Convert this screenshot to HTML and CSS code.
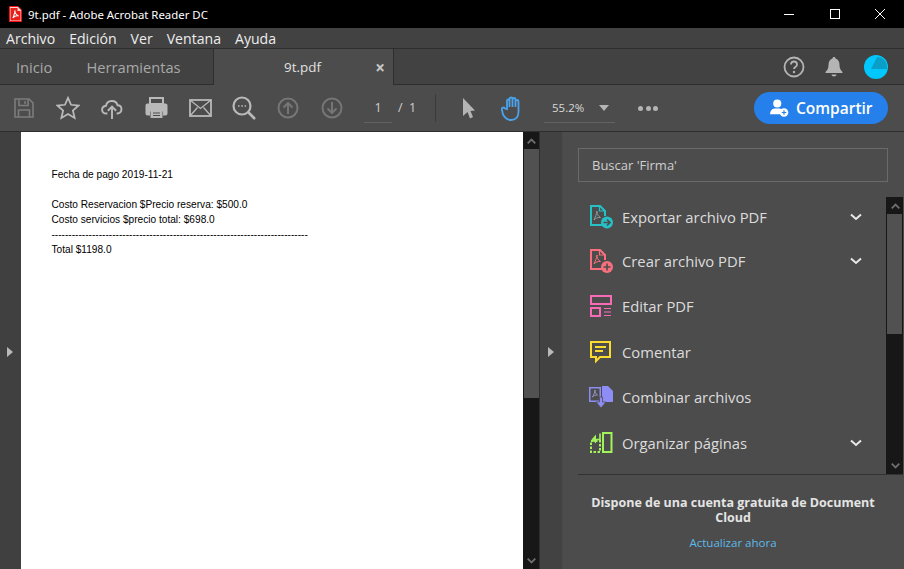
FILE: index.html
```html
<!DOCTYPE html>
<html lang="es">
<head>
    <meta charset="UTF-8">
    <title>9t.pdf - Adobe Acrobat Reader DC</title>
    <link rel="stylesheet" href="styles.css">
</head>
<body>

<div class="titlebar">
    <svg class="app-icon" width="13" height="16" viewBox="0 0 13 16">
        <path d="M.5.500h8.500l3.500 3.500v11.500H.5z" fill="#f5d5d5" stroke="#f01414"/>
        <path d="M1.500 2h7v3h3v9.500h-10z" fill="#e8201c"/>
        <path d="M6 4.500c-.5 2 1 4 3.500 5.500-2-.5-4 0-5.500 2 .8-2.500 2-5 2-7.500z" fill="none" stroke="#fff" stroke-width="1.100"/>
    </svg>
    <span class="title-text">9t.pdf - Adobe Acrobat Reader DC</span>
    <div class="win-buttons">
        <svg width="12" height="12" viewBox="0 0 12 12"><path d="M1 6.500h10" stroke="#fff"/></svg>
        <svg width="12" height="12" viewBox="0 0 12 12"><rect x="1.500" y="1.500" width="9" height="9" fill="none" stroke="#fff"/></svg>
        <svg width="12" height="12" viewBox="0 0 12 12"><path d="M1 1l10 10M11 1L1 11" stroke="#fff"/></svg>
    </div>
</div>

<div class="menubar">
    <span>Archivo</span>
    <span>Edición</span>
    <span>Ver</span>
    <span>Ventana</span>
    <span>Ayuda</span>
</div>

<div class="tabbar">
    <div class="home-tabs">
        <span>Inicio</span>
        <span>Herramientas</span>
    </div>
    <div class="doc-tab">
        <span class="doc-name">9t.pdf</span>
        <span class="doc-close">×</span>
    </div>
    <div class="tab-right">
        <svg width="22" height="22" viewBox="0 0 22 22">
            <circle cx="11" cy="11" r="9.500" fill="none" stroke="#b4b4b4" stroke-width="1.800"/>
            <path d="M8 8.500c0-4 6-4 6 0 0 2.500-3 2.500-3 4.500" fill="none" stroke="#b4b4b4" stroke-width="1.800"/>
            <circle cx="11" cy="16" r="1.200" fill="#b4b4b4"/>
        </svg>
        <svg width="18" height="21" viewBox="0 0 18 21">
            <path d="M9 1c1 0 1.500.6 1.500 1.500C13.500 3.500 14.500 6 14.500 9c0 3.500 1 5 3 7v1H.5v-1c2-2 3-3.500 3-7 0-3 1-5.500 4-6.500C7.500 1.600 8 1 9 1z" fill="#b4b4b4"/>
            <path d="M6.500 18.500h5c0 1-1 2-2.500 2s-2.500-1-2.500-2z" fill="#b4b4b4"/>
        </svg>
        <svg width="24" height="24" viewBox="0 0 24 24">
            <circle cx="12" cy="12" r="12" fill="#00c8ff"/>
            <path d="M13 2c5 0 9 3 10 9v3H7z" fill="#0a9fc7"/>
        </svg>
    </div>
</div>

<div class="toolbar">
    <div class="tool-group">
        <svg width="20" height="20" viewBox="0 0 20 20" fill="none" stroke="#7c7c7c" stroke-width="1.600">
            <path d="M1 1h14l4 4v14H1z"/>
            <path d="M5 1.500v6h9v-6M4.500 19v-7h11v7"/>
            <path d="M11 3v3" stroke-width="1.500"/>
        </svg>
        <svg width="24" height="24" viewBox="0 0 26 26" fill="none" stroke="#b9b9b9" stroke-width="1.900">
            <path d="M13 2l3.300 7.500 8.200.8-6.200 5.400 1.900 8.100-7.200-4.300-7.200 4.300 1.900-8.100-6.200-5.400 8.200-.8z"/>
        </svg>
        <svg width="22" height="22" viewBox="0 0 24 24" fill="none" stroke="#b9b9b9" stroke-width="2.100">
            <path d="M7 18H6c-6 0-6.500-7.500-.5-8.500C6.500 3 16.500 2.500 18 9c5.500 0 6 8 0 9h-1"/>
            <path d="M12 24V11M7.500 15l4.500-4.500 4.500 4.500"/>
        </svg>
        <svg width="23" height="22" viewBox="0 0 23 22">
            <path d="M5 1h13v6H5z" fill="none" stroke="#b9b9b9" stroke-width="2"/>
            <path d="M2.500 6.500h18a2 2 0 0 1 2 2v8a2 2 0 0 1-2 2H18v-4H5v4H2.500a2 2 0 0 1-2-2v-8a2 2 0 0 1 2-2z" fill="#b9b9b9"/>
            <path d="M5.500 13.500h12V21h-12z" fill="#b9b9b9"/>
            <path d="M8 16h7M8 18.500h7" stroke="#4c4c4c" stroke-width="1.200"/>
        </svg>
        <svg width="23" height="18" viewBox="0 0 23 18" fill="none" stroke="#b9b9b9" stroke-width="1.800">
            <rect x="1" y="1" width="21" height="16"/>
            <path d="M1 1l10.500 8.500L22 1M1 17l7.500-8.500M22 17l-7.500-8.500" stroke-width="1.300"/>
        </svg>
        <svg width="24" height="24" viewBox="0 0 24 24" fill="none" stroke="#b9b9b9" stroke-width="2.200">
            <circle cx="10" cy="10" r="8.500"/>
            <path d="M16 16l7 7" stroke-width="2.600"/>
            <path d="M6 10h1.500M9.300 10h1.500M12.600 10h1.500" stroke-width="1.600"/>
        </svg>
        <svg width="22" height="22" viewBox="0 0 22 22" fill="none" stroke="#767676" stroke-width="2">
            <circle cx="11" cy="11" r="9.500"/>
            <path d="M11 17V6M6.500 10.500L11 6l4.500 4.500"/>
        </svg>
        <svg width="22" height="22" viewBox="0 0 22 22" fill="none" stroke="#767676" stroke-width="2">
            <circle cx="11" cy="11" r="9.500"/>
            <path d="M11 5v11M6.500 11.500L11 16l4.500-4.500"/>
        </svg>
    </div>
    <div class="page-box">
        <span class="page-num">1</span>
        <span class="page-total">/ &nbsp;1</span>
    </div>
    <div class="tool-sep"></div>
    <svg class="icon-cursor" width="14" height="21" viewBox="0 0 14 21"><path d="M1 0l12 12.500-4.500.5 2.500 6-3 1.500-2.500-6.500L1 18z" fill="#b4b4b4"/></svg>
    <svg class="icon-hand" width="24" height="25" viewBox="0 0 24 25" fill="none" stroke="#4aa3ee" stroke-width="1.800">
        <path d="M6 13V5c0-2 2.500-2 2.500 0v6V3c0-2 3-2 3 0v8V3.500c0-2 3-2 3 0V11V5.500c0-2 3-2 3 0V16c0 5-3 8-7.500 8-4 0-6-2-8-5.500L1 14c-1-2 1.500-3.500 3-1.500z"/>
    </svg>
    <div class="zoom-box">
        <span>55.2%</span>
        <svg width="10" height="6" viewBox="0 0 10 6"><path d="M0 0h10L5 6z" fill="#b4b4b4"/></svg>
    </div>
    <div class="more-dots"><i></i><i></i><i></i></div>
    <div class="share-btn">
        <svg width="19" height="18" viewBox="0 0 21 20">
            <circle cx="8" cy="5" r="4.500" fill="#fff"/>
            <path d="M0 17c0-4 2-6 5-6.500h6c2 .5 3 1.500 3.500 2.500-2.500 1-3.500 2.500-3.500 4z" fill="#fff"/>
            <circle cx="15.500" cy="15" r="4.800" fill="#fff"/>
            <path d="M13 15h5M15.500 12.500v5" stroke="#2680eb" stroke-width="1.300"/>
        </svg>
        <span>Compartir</span>
    </div>
</div>

<div class="workspace">
    <div class="left-strip"><span class="arrow-right"></span></div>
    <div class="page">
        <p class="line first">Fecha de pago 2019-11-21</p>
        <p class="line gap">Costo Reservacion $Precio reserva: $500.0</p>
        <p class="line">Costo servicios $precio total: $698.0</p>
        <p class="line">----------------------------------------------------------------------------</p>
        <p class="line">Total $1198.0</p>
    </div>
    <div class="doc-scroll">
        <div class="scroll-btn">
            <svg width="9" height="6" viewBox="0 0 9 6"><path d="M.7 5.300L4.500 1.500l3.800 3.800" fill="none" stroke="#6e6e6e" stroke-width="1.800"/></svg>
        </div>
        <div class="doc-thumb"></div>
        <div class="scroll-rest"></div>
        <div class="scroll-btn">
            <svg width="9" height="6" viewBox="0 0 9 6"><path d="M.7.700l3.800 3.800L8.300.7" fill="none" stroke="#6e6e6e" stroke-width="1.800"/></svg>
        </div>
    </div>
    <div class="pane-toggle"><span class="arrow-right"></span></div>
    <div class="side-panel">
        <div class="search-box">Buscar 'Firma'</div>
        <div class="tools-wrap">
            <div class="tool-list">
                <div class="tool-row">
                    <svg width="24" height="24" viewBox="0 0 24 24" fill="none" stroke="#26c0c7" stroke-width="2">
                        <path d="M14 20H2V1h9l5 5v5"/>
                        <path d="M10.500 1v5h5" stroke-width="1.200"/>
                        <path d="M8 6c-.5 2.500 1 5 3.500 6.500-2.500-.3-5 .5-6.500 2.500 1-3 2.800-5.500 3-9z" stroke-width="1" stroke="#8a9a9b"/>
                        <circle cx="18" cy="17.500" r="6" fill="#26c0c7" stroke="none"/>
                        <path d="M14.500 17.500h6M18 14.500l3 3-3 3" stroke="#4c4c4c" stroke-width="1.600"/>
                    </svg>
                    <span class="tool-name">Exportar archivo PDF</span>
                    <svg class="chev" width="12" height="8" viewBox="0 0 12 8"><path d="M1 1.500l5 4.500 5-4.500" fill="none" stroke="#e8e8e8" stroke-width="2"/></svg>
                </div>
                <div class="tool-row">
                    <svg width="24" height="24" viewBox="0 0 24 24" fill="none" stroke="#f8707e" stroke-width="2">
                        <path d="M14 20H2V1h9l5 5v5"/>
                        <path d="M10.500 1v5h5" stroke-width="1.200"/>
                        <path d="M8 6c-.5 2.500 1 5 3.500 6.500-2.500-.3-5 .5-6.500 2.500 1-3 2.800-5.500 3-9z" stroke-width="1"/>
                        <circle cx="18" cy="18" r="6" fill="#f8707e" stroke="none"/>
                        <path d="M14.500 18h7M18 14.500v7" stroke="#4c4c4c" stroke-width="1.600"/>
                    </svg>
                    <span class="tool-name">Crear archivo PDF</span>
                    <svg class="chev" width="12" height="8" viewBox="0 0 12 8"><path d="M1 1.500l5 4.500 5-4.500" fill="none" stroke="#e8e8e8" stroke-width="2"/></svg>
                </div>
                <div class="tool-row">
                    <svg width="24" height="24" viewBox="0 0 24 24" fill="none" stroke="#f76bb6" stroke-width="2">
                        <rect x="2" y="2" width="20" height="8"/>
                        <rect x="2" y="14" width="9" height="8"/>
                        <path d="M15 14.500h7M15 18h7M15 21.500h7" stroke-width="1.200"/>
                    </svg>
                    <span class="tool-name">Editar PDF</span>
                </div>
                <div class="tool-row">
                    <svg width="24" height="24" viewBox="0 0 24 24" fill="none" stroke="#fbdc2e" stroke-width="2">
                        <path d="M2 2h19v15H11l-4 4v-4H2z"/>
                        <path d="M6 7h11M6 11h8" stroke-width="1.800"/>
                    </svg>
                    <span class="tool-name">Comentar</span>
                </div>
                <div class="tool-row">
                    <svg width="24" height="24" viewBox="0 0 24 24">
                        <path d="M0 2h12v15H0z" fill="#8e8cf5"/>
                        <path d="M1.500 3.500h9v12h-9z" fill="#4c4c4c"/>
                        <path d="M6 5c-.3 2 1 4 2.500 5-2-.2-3.500.4-5 2 1-2 2.300-4 2.500-7z" fill="none" stroke="#9a9ac8" stroke-width=".9"/>
                        <path d="M13 1h6l5 5v11H13z" fill="#8e8cf5"/>
                        <path d="M10.500 12h3v5H17l-5 6-5-6h3.500z" fill="#8e8cf5" stroke="#4c4c4c" stroke-width=".8"/>
                    </svg>
                    <span class="tool-name">Combinar archivos</span>
                </div>
                <div class="tool-row">
                    <svg width="24" height="24" viewBox="0 0 24 24" fill="none" stroke="#a2f25c" stroke-width="2">
                        <rect x="14" y="2" width="8.500" height="19"/>
                        <path d="M2 10h9v11H2z" stroke-dasharray="2.500 1.500"/>
                        <path d="M11 2.500v6H5" stroke-width="1.600"/>
                        <path d="M2.500 8.500L7 3.500v9z" fill="#a2f25c" stroke="none"/>
                    </svg>
                    <span class="tool-name">Organizar páginas</span>
                    <svg class="chev" width="12" height="8" viewBox="0 0 12 8"><path d="M1 1.500l5 4.500 5-4.500" fill="none" stroke="#e8e8e8" stroke-width="2"/></svg>
                </div>
            </div>
            <div class="tools-scroll">
                <div class="scroll-btn">
                    <svg width="9" height="6" viewBox="0 0 9 6"><path d="M.7 5.300L4.500 1.500l3.800 3.800" fill="none" stroke="#6e6e6e" stroke-width="1.800"/></svg>
                </div>
                <div class="tools-thumb"></div>
                <div class="scroll-rest"></div>
                <div class="scroll-btn">
                    <svg width="9" height="6" viewBox="0 0 9 6"><path d="M.7.700l3.800 3.800L8.300.7" fill="none" stroke="#6e6e6e" stroke-width="1.800"/></svg>
                </div>
            </div>
        </div>
        <div class="promo">
            <p class="promo-text">Dispone de una cuenta gratuita de Document Cloud</p>
            <p class="promo-link">Actualizar ahora</p>
        </div>
    </div>
</div>

</body>
</html>
```
FILE: styles.css
```css
* {
    box-sizing: border-box;
}

html, body {
    margin: 0;
    height: 569px;
    overflow: hidden;
}

body {
    font-family: "Open Sans", "Noto Sans", sans-serif;
    background-color: #4c4c4c;
    color: #e0e0e0;
    display: flex;
    flex-direction: column;
}

svg {
    display: block;
    flex: none;
}

p {
    margin: 0;
}

.titlebar {
    height: 28px;
    background-color: #000;
    color: #fff;
    display: flex;
    align-items: center;
    padding-left: 9px;
    font-family: "Noto Sans", sans-serif;
    font-size: 11.4px;
}

.title-text {
    margin-left: 6px;
}

.win-buttons {
    margin-left: auto;
    display: flex;
    gap: 33.5px;
    padding-right: 18px;
}

.menubar {
    height: 21px;
    background-color: #424242;
    border-bottom: 1px solid #2e2e2e;
    display: flex;
    align-items: center;
    padding-left: 6px;
    gap: 14px;
    font-size: 14.1px;
    color: #ededed;
}

.tabbar {
    height: 36px;
    background-color: #424242;
    border-bottom: 1px solid #2e2e2e;
    display: flex;
    font-size: 14.7px;
}

.home-tabs {
    width: 213px;
    display: flex;
    align-items: center;
    padding-left: 16px;
    gap: 34px;
    color: #a8a8a8;
}

.doc-tab {
    width: 181px;
    margin-bottom: -1px;
    background-color: #4c4c4c;
    border-left: 1px solid #2e2e2e;
    border-right: 1px solid #2e2e2e;
    display: flex;
    align-items: center;
    position: relative;
    justify-content: center;
    color: #e0e0e0;
    font-size: 13.4px;
}

.doc-name {
    margin-right: 2px;
}

.doc-close {
    position: absolute;
    right: 8px;
    font-size: 17px;
    font-weight: 700;
    color: #c8c8c8;
}

.tab-right {
    margin-left: auto;
    display: flex;
    align-items: center;
    padding-right: 16px;
}

.tab-right svg:nth-child(1) {
    margin-right: 20px;
}

.tab-right svg:nth-child(2) {
    margin-right: 21px;
}

.toolbar {
    height: 47px;
    background-color: #4c4c4c;
    border-bottom: 1px solid #2e2e2e;
    display: flex;
    align-items: center;
    padding-left: 2px;
    font-size: 13px;
}

.tool-group {
    display: grid;
    grid-template-columns: repeat(8, 44px);
    justify-items: center;
    align-items: center;
}

.page-box {
    width: 56px;
    margin-left: 10px;
    display: flex;
    align-items: center;
    color: #d0d0d0;
    font-size: 12.5px;
}

.page-num {
    width: 28px;
    height: 29px;
    line-height: 28px;
    text-align: center;
    border-bottom: 1px solid #626262;
    margin-right: 6px;
}

.page-total {
    white-space: nowrap;
    margin-top: -1px;
}

.tool-sep {
    width: 1px;
    height: 28px;
    background-color: #3a3a3a;
    margin-left: 15px;
}

.icon-cursor {
    margin-left: 26px;
}

.icon-hand {
    margin-left: 25px;
}

.zoom-box {
    width: 71px;
    height: 29px;
    margin-left: 19px;
    border-bottom: 1px solid #626262;
    display: flex;
    align-items: center;
    padding-left: 8px;
    gap: 15px;
    font-size: 11.5px;
    color: #d8d8d8;
}

.more-dots {
    display: flex;
    gap: 2.5px;
    margin-left: 23px;
}

.more-dots i {
    width: 5px;
    height: 5px;
    border-radius: 50%;
    background-color: #b4b4b4;
}

.share-btn {
    width: 134px;
    height: 32px;
    margin-left: auto;
    margin-right: 16px;
    background-color: #2680eb;
    border-radius: 16px;
    color: #fff;
    display: flex;
    align-items: center;
    padding-left: 16px;
    gap: 7px;
    font-size: 15.5px;
    font-weight: 600;
}

.workspace {
    flex: 1;
    display: flex;
    min-height: 0;
}

.left-strip {
    width: 21px;
    background-color: #404040;
    display: flex;
    align-items: center;
    padding-left: 7px;
    padding-top: 2px;
}

.arrow-right {
    width: 0;
    height: 0;
    border-left: 6px solid #b9b9b9;
    border-top: 5px solid transparent;
    border-bottom: 5px solid transparent;
}

.page {
    width: 502px;
    background-color: #fff;
    color: #000;
    font-family: "Liberation Sans", Arial, sans-serif;
    font-size: 10.15px;
    line-height: 15px;
    padding: 35px 0 0 30.5px;
}

.line {
    white-space: nowrap;
}

.gap {
    margin-top: 15px;
}

.doc-scroll {
    width: 17px;
    background-color: #171717;
    border-right: 1px solid #2e2e2e;
    display: flex;
    flex-direction: column;
    padding-left: 1px;
}

.scroll-btn {
    height: 17px;
    display: flex;
    align-items: center;
    justify-content: center;
    flex: none;
}

.doc-thumb {
    height: 249px;
    width: 15px;
    background-color: #515151;
}

.scroll-rest {
    flex: 1;
}

.pane-toggle {
    width: 23px;
    background-color: #424242;
    border-right: 1px solid #4a4a4a;
    display: flex;
    align-items: center;
    padding-left: 8px;
    padding-top: 2px;
}

.side-panel {
    flex: 1;
    background-color: #4c4c4c;
    display: flex;
    flex-direction: column;
    padding-left: 15px;
    min-width: 0;
}

.search-box {
    width: 310px;
    height: 34px;
    margin-top: 16px;
    border: 1px solid #6a6a6a;
    padding-left: 13px;
    display: flex;
    align-items: center;
    font-size: 13px;
    color: #cfcfcf;
}

.tools-wrap {
    height: 278px;
    margin-top: 15px;
    display: flex;
    border-bottom: 1px solid #333;
    margin-right: 1px;
}

.tool-list {
    width: 308px;
    margin-top: -3px;
}

.tool-row {
    height: 45.2px;
    display: flex;
    align-items: center;
    padding-left: 11px;
    gap: 9px;
    font-size: 14.8px;
    color: #dcdcdc;
}

/* the rows are not evenly spaced in the app */
.tool-row:nth-child(2) {
    margin-top: -1px;
}

.tool-row:nth-child(4) {
    margin-top: 1px;
}

.tool-name {
    flex: 1;
}

.chev {
    margin-right: 24px;
}

.tools-scroll {
    width: 17px;
    background-color: #171717;
    display: flex;
    flex-direction: column;
    padding-left: 1px;
}

.tools-thumb {
    height: 120px;
    width: 15px;
    background-color: #515151;
}

.promo {
    width: 310px;
    text-align: center;
    padding: 20px 10px 0;
}

.promo-text {
    font-size: 12.5px;
    font-weight: 700;
    line-height: 15px;
    color: #e4e4e4;
}

.promo-link {
    margin-top: 10px;
    font-size: 11.5px;
    color: #5fb8e8;
}
```
